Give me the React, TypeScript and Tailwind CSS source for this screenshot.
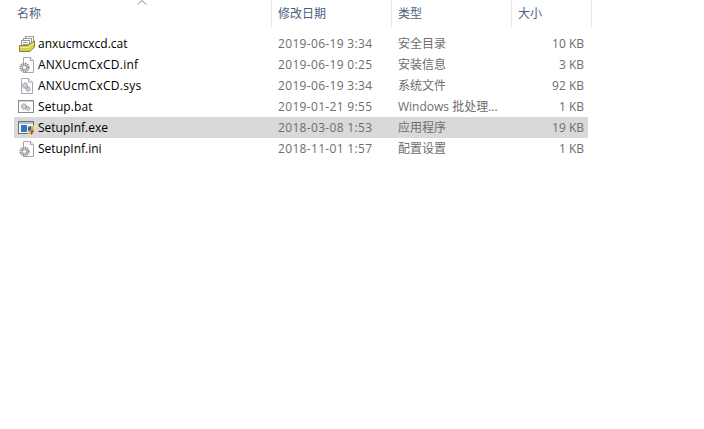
import React from "react";

function Gear({ cx, cy, r, c = "#8a8a8a" }: { cx: number; cy: number; r: number; c?: string }) {
  return (
    <g>
      <circle cx={cx} cy={cy} r={r} fill="none" stroke={c} strokeWidth={r * 0.55} strokeDasharray="1.4 0.7" />
      <circle cx={cx} cy={cy} r={r * 0.62} fill="#e4e4e4" stroke={c} strokeWidth="1" />
      <circle cx={cx} cy={cy} r={r * 0.25} fill="#fff" />
    </g>
  );
}

function Cat() {
  return (
    <svg width="18" height="16" viewBox="0 0 18 16" className="shrink-0">
      <rect x="7.5" y="0.5" width="8" height="8" fill="#fff" stroke="#9a9a9a" />
      <rect x="5.5" y="2.5" width="8" height="8" fill="#fff" stroke="#9a9a9a" />
      <rect x="3.5" y="4.5" width="8" height="7" fill="#fff" stroke="#9a9a9a" />
      <path d="M5 6.5H10M5 8.5H10" stroke="#7fa2c4" />
      <path d="M1.5 9.5H9L16.5 5V11L12 15.5H1.5Z" fill="#d6d04e" stroke="#85842c" />
      <path d="M2 11.5H11L16 7.5" fill="none" stroke="#f1ec96" />
    </svg>
  );
}

function Inf() {
  return (
    <svg width="18" height="16" viewBox="0 0 18 16" className="shrink-0">
      <path d="M5.5 0.5H12.5L15.5 3.5V15.5H5.5Z" fill="#fff" stroke="#a8a8a8" />
      <path d="M12.5 0.5V3.5H15.5" fill="#eee" stroke="#a8a8a8" />
      <Gear cx={6.5} cy={10.5} r={4} c="#929292" />
    </svg>
  );
}

function Sys() {
  return (
    <svg width="18" height="16" viewBox="0 0 18 16" className="shrink-0">
      <path d="M3.5 0.5H10.5L14.5 4V15.5H3.5Z" fill="#fff" stroke="#a8a8a8" />
      <path d="M10.5 0.5V4H14.5" fill="#eee" stroke="#a8a8a8" />
      <Gear cx={7} cy={7.5} r={2.5} c="#a8a8a8" />
      <Gear cx={10} cy={11} r={2.2} c="#8fabc6" />
    </svg>
  );
}

function Bat() {
  return (
    <svg width="18" height="16" viewBox="0 0 18 16" className="shrink-0">
      <rect x="0.5" y="1.5" width="15" height="12" fill="#fff" stroke="#8c8c8c" />
      <path d="M1 2.5H15" stroke="#cfcfcf" />
      <Gear cx={6} cy={7.5} r={2.6} c="#a8a8a8" />
      <Gear cx={9.8} cy={9.3} r={2} c="#8fabc6" />
    </svg>
  );
}

function Exe() {
  return (
    <svg width="18" height="16" viewBox="0 0 18 16" className="shrink-0">
      <rect x="0.5" y="1.5" width="15" height="12" fill="#f7f7f7" stroke="#6e6e6e" />
      <rect x="1" y="2" width="14" height="2" fill="#b8c2cc" />
      <rect x="3" y="5" width="6" height="7" fill="#2f78c8" />
      <path d="M9.5 6.5L13 5.5L16.5 6.5V11C16.5 13.5 13 15.5 13 15.5C13 15.5 9.5 13.5 9.5 11Z" fill="#f2b01e" stroke="#fff" strokeWidth="0.6" />
      <path d="M10 7V10.5H13V6Z M13 10.5V15L16 10.5Z" fill="#2a63b5" />
    </svg>
  );
}

const rows = [
  { name: "anxucmcxcd.cat", cls: "", date: "2019-06-19 3:34", type: "安全目录", size: "10 KB", Icon: Cat },
  { name: "ANXUcmCxCD.inf", cls: "tracking-[0.25px]", date: "2019-06-19 0:25", type: "安装信息", size: "3 KB", Icon: Inf },
  { name: "ANXUcmCxCD.sys", cls: "tracking-[0.25px]", date: "2019-06-19 3:34", type: "系统文件", size: "92 KB", Icon: Sys },
  { name: "Setup.bat", cls: "tracking-[0.1px]", date: "2019-01-21 9:55", type: "Windows 批处理...", size: "1 KB", Icon: Bat },
  { name: "SetupInf.exe", cls: "", date: "2018-03-08 1:53", type: "应用程序", size: "19 KB", Icon: Exe, selected: true },
  { name: "SetupInf.ini", cls: "", date: "2018-11-01 1:57", type: "配置设置", size: "1 KB", Icon: Inf },
];

export default function App() {
  return (
    <div className="relative w-[704px] h-[429px] overflow-hidden bg-white text-[12px] leading-[21px] font-['Open_Sans','Noto_Sans_CJK_SC',sans-serif]">
      <svg width="10" height="5" viewBox="0 0 10 5" className="absolute left-[137px] top-0">
        <path d="M0.5 4.5L5 0.5L9.5 4.5" fill="none" stroke="#8a8a8a" />
      </svg>
      <div className="flex h-[27px] text-[#4c607a]">
        <div className="w-[272px] pl-[17px] pt-[3px] border-r border-[#e5e5e5]">名称</div>
        <div className="w-[120px] pl-[6px] pt-[3px] border-r border-[#e5e5e5]">修改日期</div>
        <div className="w-[120px] pl-[6px] pt-[3px] border-r border-[#e5e5e5]">类型</div>
        <div className="w-[80px] pl-[6px] pt-[3px] border-r border-[#e5e5e5]">大小</div>
      </div>
      <div className="mt-[6px] ml-[14px] w-[574px] flex flex-col">
        {rows.map((r) => (
          <div key={r.name} className={`flex h-[21px] items-center ${r.selected ? "bg-[#d9d9d9]" : ""}`}>
            <div className="w-[257px] flex items-center">
              <div className="w-[24px] pl-[4px] flex items-center"><r.Icon /></div>
              <span className={`text-black ${r.cls}`}>{r.name}</span>
            </div>
            <div className="w-[120px] pl-[7px] text-[#6d6d6d] tracking-[0.33px]">{r.date}</div>
            <div className="w-[120px] pl-[7px] text-[#6d6d6d]">{r.type}</div>
            <div className="w-[73px] text-right text-[#6d6d6d]">{r.size}</div>
          </div>
        ))}
      </div>
    </div>
  );
}
